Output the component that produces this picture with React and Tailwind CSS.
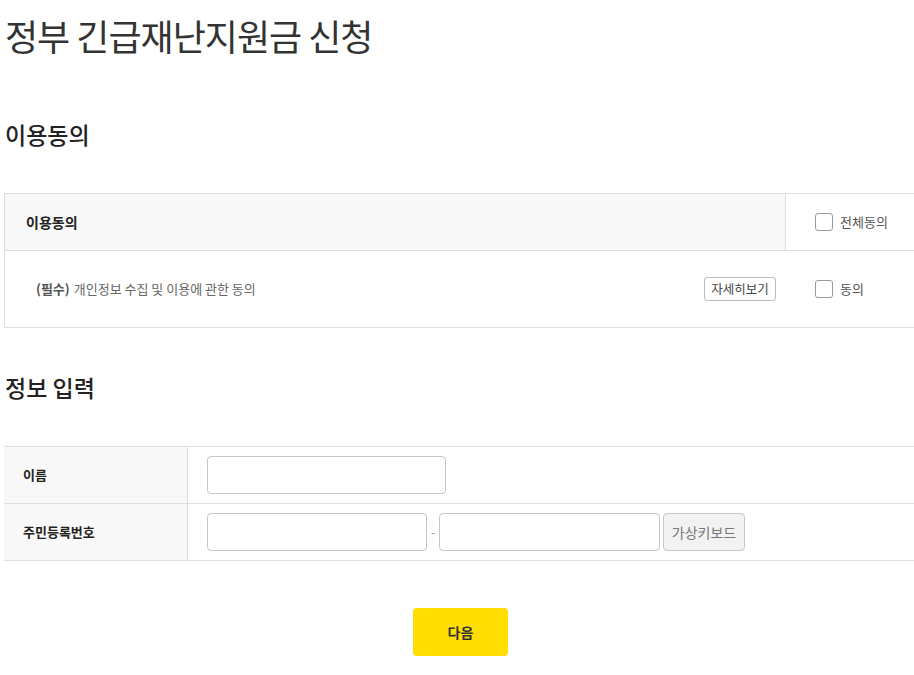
import React from "react";

const font = { fontFamily: '"Noto Sans CJK KR", "Noto Sans", sans-serif' };

const Checkbox = () => (
  <span className="inline-block w-[18px] h-[18px] border border-[#9a9a9a] rounded-[3px] bg-white" />
);

export default function App() {
  return (
    <div className="w-[914px] h-[675px] overflow-hidden bg-white text-[#333]" style={font}>
      <h1 className="pl-[5px] pt-[12px] text-[36px] leading-[46px] font-normal text-[#333] tracking-[-1px]">
        정부 긴급재난지원금 신청
      </h1>

      <h2 className="pl-[5px] mt-[60px] text-[23px] leading-[32px] font-medium text-[#222]">
        이용동의
      </h2>

      <div className="ml-[4px] mt-[43px] border-t border-l border-b border-[#dedede] w-[911px]">
        <div className="flex h-[57px] border-b border-[#dedede]">
          <div className="flex-1 bg-[#f8f8f8] border-r border-[#dedede] flex items-center pl-[21px] text-[14px] font-bold text-[#222]">
            이용동의
          </div>
          <div className="w-[129px] flex items-center pl-[29px] gap-[7px] text-[13px] text-[#555]">
            <Checkbox />
            <span>전체동의</span>
          </div>
        </div>
        <div className="flex h-[76px]">
          <div className="flex-1 flex items-center pl-[31px] pr-[10px] text-[13px] text-[#666]">
            <span className="font-bold text-[#555] mr-[4px]">(필수)</span>
            <span>개인정보 수집 및 이용에 관한 동의</span>
            <button className="ml-auto w-[72px] h-[24px] border border-[#bbb] rounded-[3px] bg-white text-[12.5px] text-[#444] leading-none">
              자세히보기
            </button>
          </div>
          <div className="w-[129px] flex items-center pl-[29px] gap-[7px] text-[13px] text-[#555]">
            <Checkbox />
            <span>동의</span>
          </div>
        </div>
      </div>

      <h2 className="pl-[5px] mt-[43px] text-[23px] leading-[32px] font-medium text-[#222]">
        정보 입력
      </h2>

      <div className="ml-[4px] mt-[43px] border-t border-[#dedede] w-[911px]">
        <div className="flex h-[57px] border-b border-[#dedede]">
          <div className="w-[184px] bg-[#f8f8f8] border-r border-[#dedede] flex items-center pl-[19px] text-[13px] font-bold text-[#222]">
            이름
          </div>
          <div className="flex-1 flex items-center pl-[19px]">
            <input className="w-[239px] h-[38px] border border-[#c6c6c6] rounded-[4px] outline-none px-2" />
          </div>
        </div>
        <div className="flex h-[57px] border-b border-[#dedede]">
          <div className="w-[184px] bg-[#f8f8f8] border-r border-[#dedede] flex items-center pl-[19px] text-[13px] font-bold text-[#222]">
            주민등록번호
          </div>
          <div className="flex-1 flex items-center pl-[19px]">
            <input className="w-[220px] h-[38px] border border-[#c6c6c6] rounded-[4px] outline-none px-2" />
            <span className="w-[12px] text-center text-[11px] text-[#888]">-</span>
            <input className="w-[221px] h-[38px] border border-[#c6c6c6] rounded-[4px] outline-none px-2" />
            <button className="ml-[3px] w-[82px] h-[38px] border border-[#c6c6c6] rounded-[4px] bg-[#f2f2f2] text-[14px] text-[#777]">
              가상키보드
            </button>
          </div>
        </div>
      </div>

      <div className="flex justify-center mt-[47px] pl-[7px]">
        <button className="w-[95px] h-[48px] bg-[#ffdd00] rounded-[4px] text-[14px] font-bold text-[#333]">
          다음
        </button>
      </div>
    </div>
  );
}
